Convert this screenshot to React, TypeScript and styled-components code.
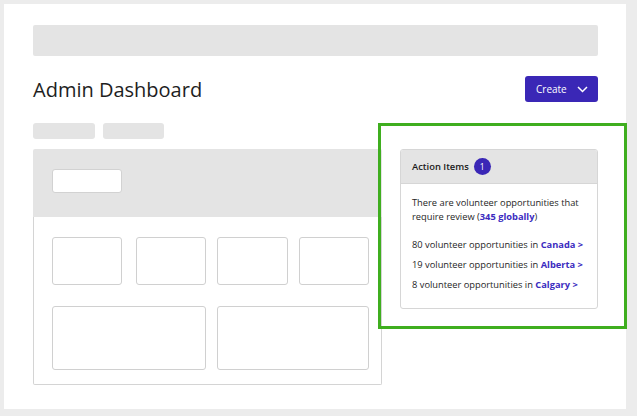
import React from 'react';
import styled, { createGlobalStyle } from 'styled-components';

const GlobalStyle = createGlobalStyle`
  html, body {
    margin: 0;
    padding: 0;
    background: #ececec;
  }
  body {
    font-family: 'Open Sans', 'Noto Sans', sans-serif;
    color: #222;
  }
`;

const Page = styled.div`
  box-sizing: border-box;
  margin: 4px 0 0 4px;
  width: 622px;
  height: 405px;
  background: #fff;
  padding: 21px 28px 0 29px;
`;

const TopBar = styled.div`
  height: 31px;
  background: #e4e4e4;
  border-radius: 2px;
`;

const HeaderRow = styled.div`
  display: flex;
  align-items: center;
  justify-content: space-between;
  margin-top: 20px;
  height: 26px;
`;

const Title = styled.h1`
  margin: 0;
  font-size: 20px;
  font-weight: 400;
  color: #1e1e1e;
`;

const CreateButton = styled.button`
  display: flex;
  align-items: center;
  gap: 10px;
  height: 26px;
  width: 73px;
  box-sizing: border-box;
  padding: 0 0 0 11px;
  border: none;
  border-radius: 3px;
  background: #3a27b6;
  color: #fff;
  font-family: inherit;
  font-size: 10px;
`;

const Columns = styled.div`
  display: grid;
  grid-template-columns: 349px 198px;
  column-gap: 18px;
  margin-top: 21px;
  align-items: start;
`;

const LeftColumn = styled.div`
  display: flex;
  flex-direction: column;
`;

const Pills = styled.div`
  display: flex;
  gap: 8px;
`;

const Pill = styled.div<{ $w: number }>`
  width: ${p => p.$w}px;
  height: 16px;
  border-radius: 3px;
  background: #e4e4e4;
`;

const Board = styled.div`
  margin-top: 10px;
`;

const BoardHead = styled.div`
  height: 68px;
  box-sizing: border-box;
  background: #e4e4e4;
  padding: 20px 19px;
  border-radius: 2px 2px 0 0;
`;

const SearchBox = styled.div`
  width: 70px;
  height: 24px;
  box-sizing: border-box;
  background: #fff;
  border: 1px solid #d2d2d2;
  border-radius: 3px;
`;

const BoardBody = styled.div`
  box-sizing: border-box;
  height: 168px;
  border: 1px solid #d4d4d4;
  border-top: none;
  border-radius: 0 0 2px 2px;
  padding: 20px 12px 0 18px;
  display: grid;
  grid-template-columns: 154px 152px;
  column-gap: 11px;
  row-gap: 21px;
  align-content: start;
`;

const Pair = styled.div`
  display: flex;
  justify-content: space-between;
`;

const Tile = styled.div<{ $w?: number; $h: number }>`
  box-sizing: border-box;
  width: ${p => (p.$w ? `${p.$w}px` : '100%')};
  height: ${p => p.$h}px;
  border: 1px solid #d0d0d0;
  border-radius: 3px;
  background: #fff;
`;

const Highlighted = styled.div`
  position: relative;
  margin-top: 26px;

  &::before {
    content: '';
    position: absolute;
    top: -26px;
    left: -22px;
    right: -29px;
    bottom: -20px;
    border: 3px solid #3fae1f;
    pointer-events: none;
  }
`;

const ActionCard = styled.div`
  border: 1px solid #d6d6d6;
  border-radius: 3px;
  overflow: hidden;
  background: #fff;
`;

const CardHead = styled.div`
  display: flex;
  align-items: center;
  gap: 5px;
  height: 33px;
  padding: 0 11px;
  background: #e4e4e4;
  border-bottom: 1px solid #d6d6d6;
  font-size: 9.4px;
  font-weight: 600;
  color: #1a1a1a;
`;

const Badge = styled.span`
  display: inline-flex;
  align-items: center;
  justify-content: center;
  width: 17px;
  height: 17px;
  border-radius: 50%;
  background: #3a27b6;
  color: #fff;
  font-size: 8.5px;
  font-weight: 400;
`;

const CardBody = styled.div`
  padding: 12px 11px 16px;
  font-size: 9.3px;
  color: #262626;
`;

const Intro = styled.p`
  margin: 0 0 14px;
  line-height: 14px;
`;

const Items = styled.ul`
  list-style: none;
  margin: 0;
  padding: 0;
  display: flex;
  flex-direction: column;
  gap: 6px;
  line-height: 14px;
`;

const Link = styled.a`
  color: #3b2cc0;
  font-weight: 700;
  text-decoration: none;
`;

const Chevron = () => (
  <svg width="11" height="7" viewBox="0 0 11 7" fill="none">
    <path d="M1 1l4.5 4.5L10 1" stroke="#fff" strokeWidth="1.5" />
  </svg>
);

const regions = [
  { count: 80, name: 'Canada' },
  { count: 19, name: 'Alberta' },
  { count: 8, name: 'Calgary' },
];

export default function App() {
  return (
    <>
      <GlobalStyle />
      <Page>
        <TopBar />
        <HeaderRow>
          <Title>Admin Dashboard</Title>
          <CreateButton>
            Create <Chevron />
          </CreateButton>
        </HeaderRow>
        <Columns>
          <LeftColumn>
            <Pills>
              <Pill $w={62} />
              <Pill $w={61} />
            </Pills>
            <Board>
              <BoardHead>
                <SearchBox />
              </BoardHead>
              <BoardBody>
                <Pair>
                  <Tile $w={70} $h={48} />
                  <Tile $w={70} $h={48} />
                </Pair>
                <Pair>
                  <Tile $w={71} $h={48} />
                  <Tile $w={70} $h={48} />
                </Pair>
                <Tile $h={64} />
                <Tile $h={64} />
              </BoardBody>
            </Board>
          </LeftColumn>
          <Highlighted>
            <ActionCard>
              <CardHead>
                Action Items <Badge>1</Badge>
              </CardHead>
              <CardBody>
                <Intro>
                  There are volunteer opportunities that require review (<Link href="#">345 globally</Link>)
                </Intro>
                <Items>
                  {regions.map(r => (
                    <li key={r.name}>
                      {r.count} volunteer opportunities in <Link href="#">{r.name} &gt;</Link>
                    </li>
                  ))}
                </Items>
              </CardBody>
            </ActionCard>
          </Highlighted>
        </Columns>
      </Page>
    </>
  );
}
